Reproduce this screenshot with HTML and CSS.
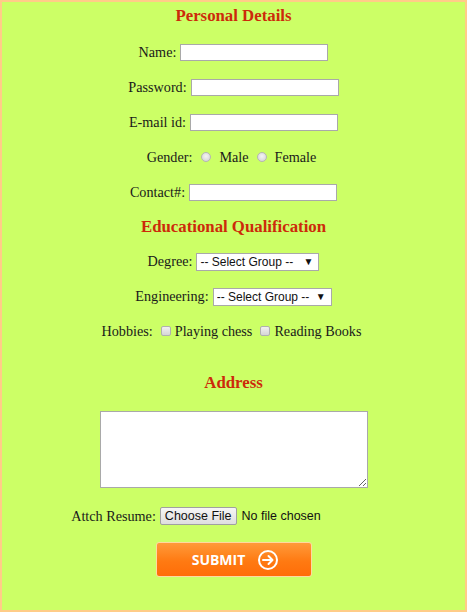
FILE: index.html
```html
<!DOCTYPE html>
<html>
<head>
<meta charset="utf-8">
<link rel="stylesheet" href="styles.css">
</head>
<body>
<form class="page">
  <div class="heading h1">Personal Details</div>
  <div class="row"><label>Name:</label><input class="text" type="text"></div>
  <div class="row"><label>Password:</label><input class="text" type="password"></div>
  <div class="row"><label>E-mail id:</label><input class="text" type="text"></div>
  <div class="row gender">
    <label>Gender:</label>
    <input class="radio" type="radio" name="g"><span>Male</span>
    <input class="radio" type="radio" name="g"><span>Female</span>
  </div>
  <div class="row"><label>Contact#:</label><input class="text" type="text"></div>
  <div class="heading h2">Educational Qualification</div>
  <div class="row"><label>Degree:</label>
    <span class="sel sel-degree"><select><option>-- Select Group --</option></select><span class="arrow">&#9660;</span></span>
  </div>
  <div class="row"><label>Engineering:</label>
    <span class="sel sel-eng"><select><option>-- Select Group --</option></select><span class="arrow">&#9660;</span></span>
  </div>
  <div class="row hobbies">
    <label>Hobbies:</label>
    <input class="check" type="checkbox"><span>Playing chess</span>
    <input class="check" type="checkbox"><span>Reading Books</span>
  </div>
  <div class="heading h3">Address</div>
  <div class="area-row"><textarea></textarea></div>
  <div class="row file-row"><label>Attch Resume:</label>
    <span class="file"><span class="file-btn">Choose File</span><span class="file-txt">No file chosen</span></span>
  </div>
  <div class="submit-row">
    <button type="button" class="submit"><span>SUBMIT</span>
      <svg width="22" height="22" viewBox="0 0 22 22"><circle cx="11" cy="11" r="9" fill="none" stroke="#fff" stroke-width="2"/><path d="M6 11h9M11.5 7l4 4-4 4" fill="none" stroke="#fff" stroke-width="2" stroke-linecap="round" stroke-linejoin="round"/></svg>
    </button>
  </div>
</form>
</body>
</html>
```

FILE: styles.css
```css
html, body {
  margin: 0;
  padding: 0;
}
body {
  width: 467px;
  height: 612px;
  background: #ccff66;
}
.page {
  box-sizing: border-box;
  width: 467px;
  height: 612px;
  border: 2px solid #ffcc88;
  background: #ccff66;
  display: flex;
  flex-direction: column;
  font-family: "Liberation Serif", "Times New Roman", serif;
  font-size: 14.2px;
  color: #1a1a1a;
}
.heading {
  box-sizing: border-box;
  display: flex;
  justify-content: center;
  align-items: center;
  font-weight: bold;
  font-size: 16.8px;
  color: #cc2a0a;
}
.h1 { height: 33px; padding-bottom: 5px; }
.h2 { height: 34px; }
.h3 { height: 36px; margin-top: 16px; }
.row {
  height: 35px;
  display: flex;
  justify-content: center;
  align-items: center;
  gap: 4px;
}
.text {
  box-sizing: border-box;
  width: 148px;
  height: 17px;
  margin: 0;
  border: 1px solid #a9a9a9;
  background: #fff;
  padding: 0;
}
.gender label { margin-right: 5px; }
.gender span { margin-right: 4px; }
.radio {
  appearance: none;
  width: 10px;
  height: 10px;
  margin: 0 4px 2px 0;
  border-radius: 50%;
  border: 1px solid #b5b5b5;
  background: radial-gradient(circle at 50% 40%, #f4f4f4, #d0d0d0);
  box-sizing: border-box;
}
.hobbies label { margin-right: 4px; }
.hobbies span { margin-right: 4px; }
.check {
  appearance: none;
  width: 10px;
  height: 10px;
  margin: 0 0 1px 0;
  border: 1px solid #b0b0b0;
  border-radius: 2px;
  background: linear-gradient(#f2f2f2, #d6d6d6);
  box-sizing: border-box;
}
.sel {
  box-sizing: border-box;
  height: 18px;
  display: inline-flex;
  align-items: center;
  background: #fff;
  border: 1px solid #a9a9a9;
  font-family: "Liberation Sans", Arial, sans-serif;
  font-size: 12px;
  color: #111;
}
.sel select {
  appearance: none;
  border: none;
  background: transparent;
  font: inherit;
  color: inherit;
  padding: 0 0 0 3px;
  margin: 0;
  outline: none;
  flex: 1;
}
.sel .arrow {
  font-size: 10px;
  margin-right: 5px;
}
.sel-degree { width: 123px; }
.sel-eng { width: 119px; }
.area-row {
  display: flex;
  justify-content: center;
  margin-top: 10px;
}
textarea {
  box-sizing: border-box;
  width: 268px;
  height: 77px;
  margin: 0;
  border: 1px solid #a9a9a9;
  background: #fff;
}
.file-row {
  margin-top: 11px;
  height: 34px;
}
.file {
  width: 236px;
  display: inline-flex;
  align-items: center;
  gap: 5px;
  font-family: "Liberation Sans", Arial, sans-serif;
  font-size: 12.5px;
  color: #111;
}
.file-btn {
  box-sizing: border-box;
  height: 18px;
  padding: 0 4px;
  display: inline-flex;
  align-items: center;
  border: 1px solid #a0a0a0;
  border-radius: 2px;
  background: linear-gradient(#f6f6f6, #dedede);
}
.submit-row {
  display: flex;
  justify-content: center;
  margin-top: 9px;
}
.submit {
  box-sizing: border-box;
  width: 156px;
  height: 35px;
  border: 1px solid #ffd9a0;
  border-radius: 3px;
  background: linear-gradient(#ff9a3a, #ff7a12 55%, #ff6d08);
  display: flex;
  align-items: center;
  justify-content: center;
  gap: 12px;
  padding: 0 0 0 4px;
  color: #fff;
  font-family: "Open Sans", "DejaVu Sans", sans-serif;
  font-weight: bold;
  font-size: 14px;
  letter-spacing: 0;
}
.submit svg { display: block; }
```
